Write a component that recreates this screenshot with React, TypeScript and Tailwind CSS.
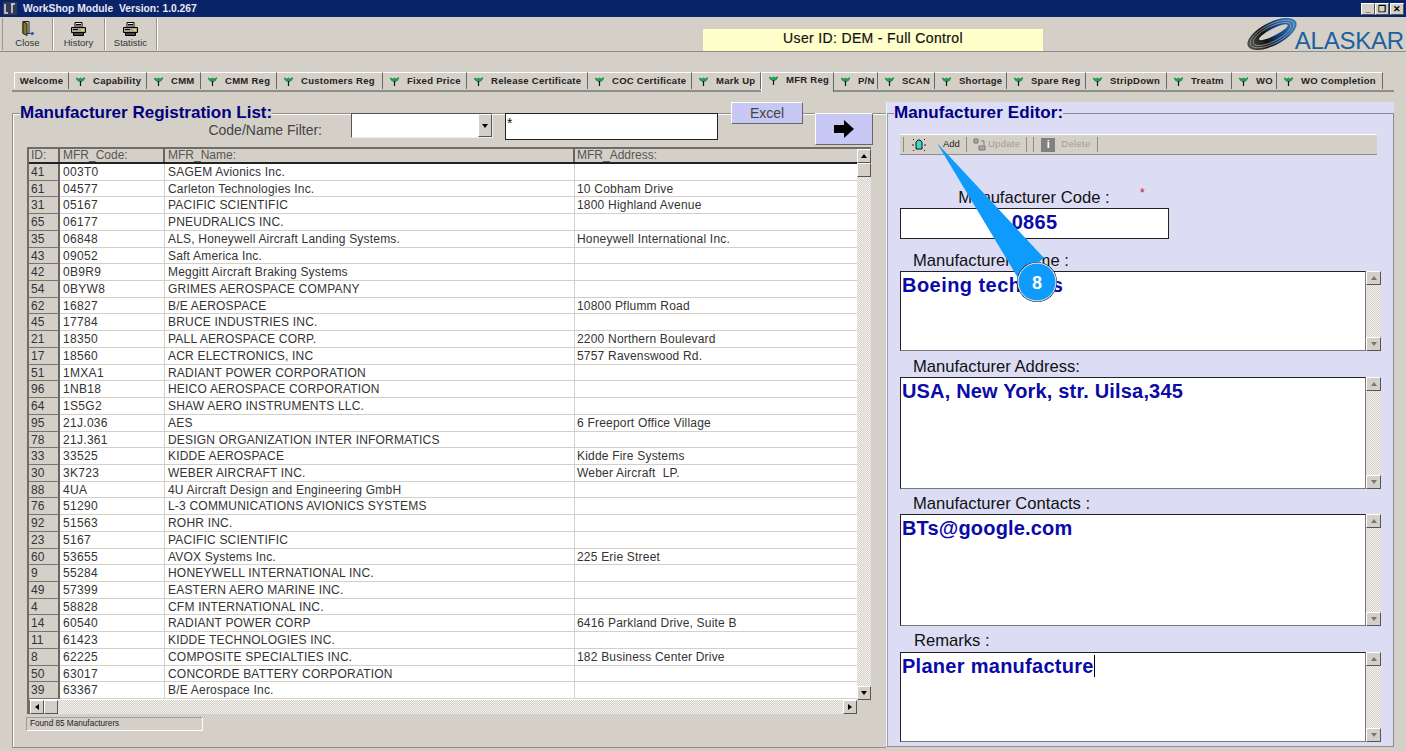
import React from "react";

const rows: [string, string, string, string][] = [
  ["41", "003T0", "SAGEM Avionics Inc.", ""],
  ["61", "04577", "Carleton Technologies Inc.", "10 Cobham Drive"],
  ["31", "05167", "PACIFIC SCIENTIFIC", "1800 Highland Avenue"],
  ["65", "06177", "PNEUDRALICS INC.", ""],
  ["35", "06848", "ALS, Honeywell Aircraft Landing Systems.", "Honeywell International Inc."],
  ["43", "09052", "Saft America Inc.", ""],
  ["42", "0B9R9", "Meggitt Aircraft Braking Systems", ""],
  ["54", "0BYW8", "GRIMES AEROSPACE COMPANY", ""],
  ["62", "16827", "B/E AEROSPACE", "10800 Pflumm Road"],
  ["45", "17784", "BRUCE INDUSTRIES INC.", ""],
  ["21", "18350", "PALL AEROSPACE CORP.", "2200 Northern Boulevard"],
  ["17", "18560", "ACR ELECTRONICS, INC", "5757 Ravenswood Rd."],
  ["51", "1MXA1", "RADIANT POWER CORPORATION", ""],
  ["96", "1NB18", "HEICO AEROSPACE CORPORATION", ""],
  ["64", "1S5G2", "SHAW AERO INSTRUMENTS LLC.", ""],
  ["95", "21J.036", "AES", "6 Freeport Office Village"],
  ["78", "21J.361", "DESIGN ORGANIZATION INTER INFORMATICS", ""],
  ["33", "33525", "KIDDE AEROSPACE", "Kidde Fire Systems"],
  ["30", "3K723", "WEBER AIRCRAFT INC.", "Weber Aircraft  LP."],
  ["88", "4UA", "4U Aircraft Design and Engineering GmbH", ""],
  ["76", "51290", "L-3 COMMUNICATIONS AVIONICS SYSTEMS", ""],
  ["92", "51563", "ROHR INC.", ""],
  ["23", "5167", "PACIFIC SCIENTIFIC", ""],
  ["60", "53655", "AVOX Systems Inc.", "225 Erie Street"],
  ["9", "55284", "HONEYWELL INTERNATIONAL INC.", ""],
  ["49", "57399", "EASTERN AERO MARINE INC.", ""],
  ["4", "58828", "CFM INTERNATIONAL INC.", ""],
  ["14", "60540", "RADIANT POWER CORP", "6416 Parkland Drive, Suite B"],
  ["11", "61423", "KIDDE TECHNOLOGIES INC.", ""],
  ["8", "62225", "COMPOSITE SPECIALTIES INC.", "182 Business Center Drive"],
  ["50", "63017", "CONCORDE BATTERY CORPORATION", ""],
  ["39", "63367", "B/E Aerospace Inc.", ""],
];

const tabs: [string, number][] = [
  ["Capability", 78], ["CMM", 54], ["CMM Reg", 76], ["Customers Reg", 106], ["Fixed Price", 84],
  ["Release Certificate", 121], ["COC Certificate", 104], ["Mark Up", 69], ["MFR Reg", 73], ["P/N", 44],
  ["SCAN", 57], ["Shortage", 72], ["Spare Reg", 79], ["StripDown", 81], ["Treatm", 65], ["WO", 45], ["WO Completion", 106],
];

const raised = "border border-t-white border-l-white border-r-[#555] border-b-[#555]";
const dither = "bg-[repeating-conic-gradient(#d4d0c8_0_25%,#f4f3f1_0_50%)] bg-[length:2px_2px]";

function Flag() {
  return (
    <svg width="9" height="9" viewBox="0 0 9 9" className="shrink-0">
      <path d="M0 1 L3 2 L4.500 1 L6 2 L9 0.500 L7.500 3.500 L5.500 4.500 L3.500 4.500 L1.500 3.500 Z" fill="#10b048" stroke="#0a5a28" strokeWidth="0.500" />
      <path d="M4.500 4 V9" stroke="#111" strokeWidth="1.200" />
    </svg>
  );
}

function Tri({ dir, color = "#000" }: { dir: "u" | "d" | "l" | "r"; color?: string }) {
  const p = { u: "1,6 4,2 7,6", d: "1,2 4,6 7,2", l: "6,1 2,4 6,7", r: "2,1 6,4 2,7" }[dir];
  return (
    <svg width="8" height="8" viewBox="0 0 8 8">
      <polygon points={p} fill={color} />
    </svg>
  );
}

function Printer() {
  return (
    <svg width="15" height="14" viewBox="0 0 15 14">
      <path d="M4 0.500h7v5H4z" fill="#f4f4f4" stroke="#000" />
      <path d="M0.500 5.500h14v5h-14z" fill="#a8a49c" stroke="#000" />
      <path d="M2.500 10.500h10v3h-10z" fill="#444" stroke="#000" />
      <path d="M5 2.500h5M5 4h5M2 7.500h5" stroke="#000" />
      <path d="M10 7h3v2h-3z" fill="#e0d040" />
    </svg>
  );
}

function Door() {
  return (
    <svg width="16" height="16" viewBox="0 0 16 16">
      <path d="M3 0.500h6v12H3z" fill="#c8c8c8" stroke="#222" />
      <path d="M3 0.500l4 2v12l-4-2z" fill="#86761a" stroke="#222" />
      <path d="M9 12.500h4M11.500 11L13.500 12.500l-2 1.500" stroke="#2050b0" strokeWidth="1.200" fill="none" />
    </svg>
  );
}

function ToolBtn({ label, w, children }: { label: string; w: string; children: React.ReactNode }) {
  return (
    <div className={`${w} flex flex-col items-center h-[32px] pt-[3px] border-r border-r-[#9a978f] shadow-[1px_0_0_#fff]`}>
      <div className="h-[15px] flex items-center">{children}</div>
      <span className="text-[9.5px] leading-[11px] text-[#333] mt-[1px]">{label}</span>
    </div>
  );
}

function ScrollBtn({ dir, color, className = "" }: { dir: "u" | "d" | "l" | "r"; color?: string; className?: string }) {
  return (
    <div className={`${raised} bg-[#d4d0c8] flex items-center justify-center w-[14px] h-[14px] shrink-0 ${className}`}>
      <Tri dir={dir} color={color} />
    </div>
  );
}

function Memo({ h, value, caret, track = "tracking-[0.17px]" }: { h: string; value: string; caret?: boolean; track?: string }) {
  return (
    <div className={`flex ${h} mr-[12px] mt-[1px]`}>
      <div className={`flex-1 bg-white border border-[#222] border-r-[#777] border-b-[#777] px-[1px] text-[20px] leading-[26px] font-bold text-[#0a0aa8] ${track} whitespace-nowrap overflow-hidden`}>
        {value}
        {caret && <span className="inline-block w-[1px] h-[22px] bg-black align-[-4px]" />}
      </div>
      <div className={`w-[15px] flex flex-col justify-between ${dither}`}>
        <ScrollBtn dir="u" color="#777" className="w-[15px]" />
        <ScrollBtn dir="d" color="#777" className="w-[15px]" />
      </div>
    </div>
  );
}

function Label({ children, ml }: { children: React.ReactNode; ml: string }) {
  return <div className={`${ml} text-[16.6px] leading-[18px] text-[#111] whitespace-nowrap`}>{children}</div>;
}

export default function App() {
  return (
    <div className="relative w-[1406px] h-[751px] overflow-hidden bg-[#d4d0c8] font-['Liberation_Sans',Arial,sans-serif] text-[#333]">
      {/* title bar */}
      <div className="h-[17px] bg-[#0a246a] flex items-center pl-[3px] pr-[2px]">
        <svg width="14" height="13" viewBox="0 0 14 13">
          <rect width="14" height="13" fill="#333a55" />
          <path d="M2 2v9h3M8 2h4M9 2v9" stroke="#ddd" strokeWidth="1.500" fill="none" />
        </svg>
        <span className="ml-[6px] text-[10.3px] font-bold text-[#e8e8f4] whitespace-pre">WorkShop Module  Version: 1.0.267</span>
        <div className="ml-auto flex">
          {["_", "❐", "✕"].map((s, i) => (
            <div key={i} className={`${raised} w-[14px] h-[12px] bg-[#d4d0c8] text-[9px] leading-[10px] text-black text-center font-bold ${i === 1 ? "mr-[1px]" : ""}`}>
              {s}
            </div>
          ))}
        </div>
      </div>

      {/* toolbar */}
      <div className="h-[35px] flex items-start border-b border-b-[#8f8c85] pt-[1px]">
        <div className="w-[3px] h-[32px] border-r border-r-[#9a978f]" />
        <ToolBtn label="Close" w="w-[50px]"><Door /></ToolBtn>
        <ToolBtn label="History" w="w-[52px]"><Printer /></ToolBtn>
        <ToolBtn label="Statistic" w="w-[52px]"><Printer /></ToolBtn>
        <div className="ml-[546px] mt-[11px] w-[340px] h-[22px] bg-[#ffffcc] text-center text-[14px] leading-[19px] text-[#111] tracking-[0.35px] [-webkit-text-stroke:0.2px_#111]">
          User ID: DEM - Full Control
        </div>
        <div className="ml-auto mr-[2px] mt-[-1px] flex items-end h-[33px] relative">
          <svg width="54" height="32" viewBox="0 0 54 32" className="mr-[-5px]">
            <defs>
              <linearGradient id="sw" x1="0" x2="1" y1="0" y2="0">
                <stop offset="0" stopColor="#555" />
                <stop offset="0.35" stopColor="#111" />
                <stop offset="0.6" stopColor="#14427e" />
                <stop offset="1" stopColor="#3a7fc0" />
              </linearGradient>
            </defs>
            <g transform="rotate(-27 26 16)">
              <ellipse cx="26" cy="16" rx="27" ry="11.500" fill="url(#sw)" />
              <ellipse cx="26" cy="16" rx="24" ry="9.500" fill="none" stroke="#d4d0c8" strokeWidth="0.500" />
              <ellipse cx="26" cy="16" rx="21" ry="7.500" fill="none" stroke="#d4d0c8" strokeWidth="0.500" />
              <ellipse cx="28" cy="15" rx="16" ry="3.500" fill="#d4d0c8" />
            </g>
          </svg>
          <span className="text-[24px] leading-[22px] text-[#1c5f9f] tracking-[-0.2px] mb-[-2px]">ALASKAR</span>
        </div>
      </div>

      {/* tabs */}
      <div className="ml-[12px] mr-[12px] mt-[20px] h-[20px] border-b-2 border-b-[#8f8c85] flex items-end pl-[2px] text-[9.5px] font-bold text-[#222] tracking-[0.28px] whitespace-nowrap">
        <div className="w-[55px] h-[17px] flex items-center justify-center border-t border-t-white border-l border-l-white border-r border-r-[#666] mb-[1px]">Welcome</div>
        {tabs.map(([t, w]) => {
          const active = t === "MFR Reg";
          return (
            <div
              key={t}
              style={{ width: w }}
              className={`flex items-center gap-[8px] pl-[7px] border-r border-r-[#666] ${active ? "h-[20px] pb-[4px] bg-[#d4d0c8] border-t border-t-white border-l border-l-white mb-[-2px] relative" : "h-[17px] border-t border-t-white mb-[1px]"}`}
            >
              <Flag />
              <span>{t}</span>
            </div>
          );
        })}
      </div>

      {/* body */}
      <div className="flex h-[646px] mt-[10px]">
        {/* left */}
        <div className="ml-[12px] mt-[11px] w-[874px] h-[635px] border-t border-l border-b border-[#8f8c85] shadow-[inset_1px_1px_0_#fff]">
          <div className="flex items-start mt-[-12px] h-[45px]">
            <div className="w-[310px] shrink-0">
              <div className="ml-[7px] mt-[1px] w-fit bg-[#d4d0c8] text-[17px] leading-[20px] font-bold text-[#000080] whitespace-nowrap">Manufacturer Registration List:</div>
              <div className="mt-[-1px] text-right pr-[1px] text-[14px] leading-[16px] text-[#444]">Code/Name Filter:</div>
            </div>
            <div className="ml-[28px] mt-[11px] w-[142px] h-[25px] flex bg-white border border-t-[#555] border-l-[#555] border-r-[#eee] border-b-[#eee]">
              <div className="flex-1" />
              <div className={`${raised} w-[14px] bg-[#d4d0c8] flex items-center justify-center`}>
                <Tri dir="d" />
              </div>
            </div>
            <div className="ml-[12px] mt-[11px] w-[213px] h-[27px] bg-white border border-[#222] px-[1px] text-[14px] leading-[18px] text-[#111]">*</div>
            <div className="ml-[13px] w-[72px] h-[22px] bg-[#c8c8f4] border border-t-white border-l-white border-r-[#666] border-b-[#666] text-center text-[14px] leading-[20px] text-[#444]">Excel</div>
            <div className="ml-[12px] mt-[11px] w-[58px] h-[32px] bg-[#c8c8f4] border border-t-white border-l-white border-r-[#666] border-b-[#666] flex items-center justify-center">
              <svg width="22" height="18" viewBox="0 0 22 18">
                <path d="M1 5h10V0l10 9-10 9v-5H1z" fill="#000" />
              </svg>
            </div>
          </div>

          <div className="ml-[14px] w-[844px] h-[567px] flex flex-col border-t-2 border-l-2 border-[#6f6c66] text-[12px]">
            <div className="flex flex-1 min-h-0">
              <div className="flex-1 min-w-0 bg-white">
                <div className="flex h-[15px] bg-[#d4d0c8] border-b-2 border-b-[#222] leading-[13px] text-[#555]">
                  <div className="w-[31px] pl-[2px] border-r-2 border-r-[#666]">ID:</div>
                  <div className="w-[105px] pl-[3px] border-r-2 border-r-[#666]">MFR_Code:</div>
                  <div className="w-[410px] pl-[3px] border-r-2 border-r-[#666]">MFR_Name:</div>
                  <div className="flex-1 pl-[2px]">MFR_Address:</div>
                </div>
                {rows.map((r) => (
                  <div key={r[0]} className="flex h-[16.73px] leading-[16px] whitespace-pre">
                    <div className="w-[31px] pl-[2px] bg-[#d4d0c8] border-b border-b-[#77746e] border-r-2 border-r-[#666]">{r[0]}</div>
                    <div className="w-[105px] pl-[3px] border-b border-b-[#d4d0c8] border-r border-r-[#d4d0c8] tracking-[0.3px]">{r[1]}</div>
                    <div className="w-[410px] pl-[3px] border-b border-b-[#d4d0c8] border-r border-r-[#d4d0c8] tracking-[0.2px]">{r[2]}</div>
                    <div className="flex-1 pl-[2px] border-b border-b-[#d4d0c8] tracking-[0.2px]">{r[3]}</div>
                  </div>
                ))}
              </div>
              <div className={`w-[14px] flex flex-col ${dither}`}>
                <ScrollBtn dir="u" />
                <div className={`${raised} h-[14px] bg-[#d4d0c8]`} />
                <ScrollBtn dir="d" className="mt-auto" />
              </div>
            </div>
            <div className="h-[14px] flex shrink-0">
              <div className="w-[1px] bg-[#6f6c66]" />
              <div className={`flex-1 flex ${dither}`}>
                <ScrollBtn dir="l" />
                <div className={`${raised} w-[14px] h-[14px] bg-[#d4d0c8]`} />
                <ScrollBtn dir="r" className="ml-auto" />
              </div>
              <div className="w-[14px] bg-[#d4d0c8]" />
            </div>
          </div>

          <div className="ml-[13px] mt-[3px] w-[177px] h-[14px] border border-[#a09d96] border-r-white border-b-white text-[8.2px] leading-[12px] pl-[3px] text-[#222]">Found 85 Manufacturers</div>
        </div>

        {/* right */}
        <div className="w-[508px] h-[645px] bg-[#dcdcf5] border-l border-l-[#f0f0fa] border-b border-b-[#8f8c85] pt-[11px]">
          <div className="h-[633px] border-t border-t-[#8a8a94] border-l border-l-[#a0a0aa] border-r border-r-[#8a8a94]">
            <div className="mt-[-11px] ml-[6px] w-fit bg-[#dcdcf5] text-[17px] tracking-[0.1px] leading-[20px] font-bold text-[#000080] whitespace-nowrap">Manufacturer Editor:</div>
            <div className="ml-[12px] mr-[16px] mt-[11px] h-[21px] bg-[#d4d0c8] border-t border-t-white border-b border-b-[#8f8c85] flex items-center text-[9.5px] text-[#222] pl-[3px]">
              <div className="w-[1px] h-[15px] bg-[#8f8c85] mr-[8px]" />
              <svg width="14" height="14" viewBox="0 0 14 14">
                <path d="M4 4l2-2h2l2 2v7H4z" fill="#3fd8d0" stroke="#111" />
                <path d="M1 1l1 1M13 1l-1 1M1 13l1-1M13 13l-1-1M0 7h2M12 7h2" stroke="#222" />
              </svg>
              <span className="ml-[17px]">Add</span>
              <div className="w-[1px] h-[15px] bg-[#8f8c85] mx-[6px]" />
              <svg width="14" height="13" viewBox="0 0 14 13">
                <path d="M1 1h4v4H1zM6 8h6v4H6z" fill="#aaa" stroke="#777" />
                <path d="M8 3h3v4" stroke="#777" fill="none" />
              </svg>
              <span className="ml-[1px] text-[#a09d96] tracking-[0.3px]">Update</span>
              <div className="w-[1px] h-[15px] bg-[#8f8c85] ml-[6px]" />
              <div className="w-[1px] h-[15px] bg-[#8f8c85] ml-[6px] mr-[7px]" />
              <div className="w-[14px] h-[14px] bg-[#808080] flex items-center justify-center text-white font-bold text-[11px]">i</div>
              <span className="ml-[6px] text-[#a09d96] tracking-[0.3px]">Delete</span>
              <div className="w-[1px] h-[15px] bg-[#8f8c85] ml-[6px]" />
            </div>

            <div className="relative ml-[12px] mt-[34px] w-[269px] text-center text-[16.6px] leading-[18px] text-[#111]">
              <span className="ml-[-1px]">Manufacturer Code :</span>
              <span className="absolute left-[240px] top-[-5px] text-[12px] text-[#d01030]">*</span>
            </div>
            <div className="ml-[12px] mt-[1px] w-[269px] h-[31px] bg-white border border-[#222] text-center text-[20px] leading-[26px] font-bold text-[#0a0aa8] tracking-[0.3px]">0865</div>

            <div className="ml-[12px] mt-[13px]">
              <Label ml="ml-[13px]">Manufacturer Name :</Label>
              <Memo h="h-[80px]" value="Boeing technics" track="tracking-[0.45px]" />
              <div className="mt-[7px]"><Label ml="ml-[13px]">Manufacturer Address:</Label></div>
              <Memo h="h-[112px]" value="USA, New York, str. Uilsa,345" />
              <div className="mt-[6px]"><Label ml="ml-[13px]">Manufacturer Contacts :</Label></div>
              <Memo h="h-[112px]" value="BTs@google.com" />
              <div className="mt-[6px]"><Label ml="ml-[14px]">Remarks :</Label></div>
              <div className="mt-[2px]"><Memo h="h-[90px]" value="Planer manufacture" caret track="tracking-[0.28px]" /></div>
            </div>
          </div>
        </div>
      </div>

      {/* callout */}
      <svg className="absolute left-[930px] top-[135px]" width="140" height="175" viewBox="930 135 140 175">
        <polygon points="937,143 1018,278 1044,258" fill="#0f9bfb" />
        <circle cx="1037" cy="282" r="20" fill="#101820" />
        <circle cx="1037" cy="282" r="19" fill="#0f9bfb" stroke="#fff" strokeWidth="1" />
      </svg>
      <div className="absolute left-[1017px] top-[272px] w-[40px] text-center text-[18px] leading-[22px] font-bold text-white">8</div>
    </div>
  );
}
